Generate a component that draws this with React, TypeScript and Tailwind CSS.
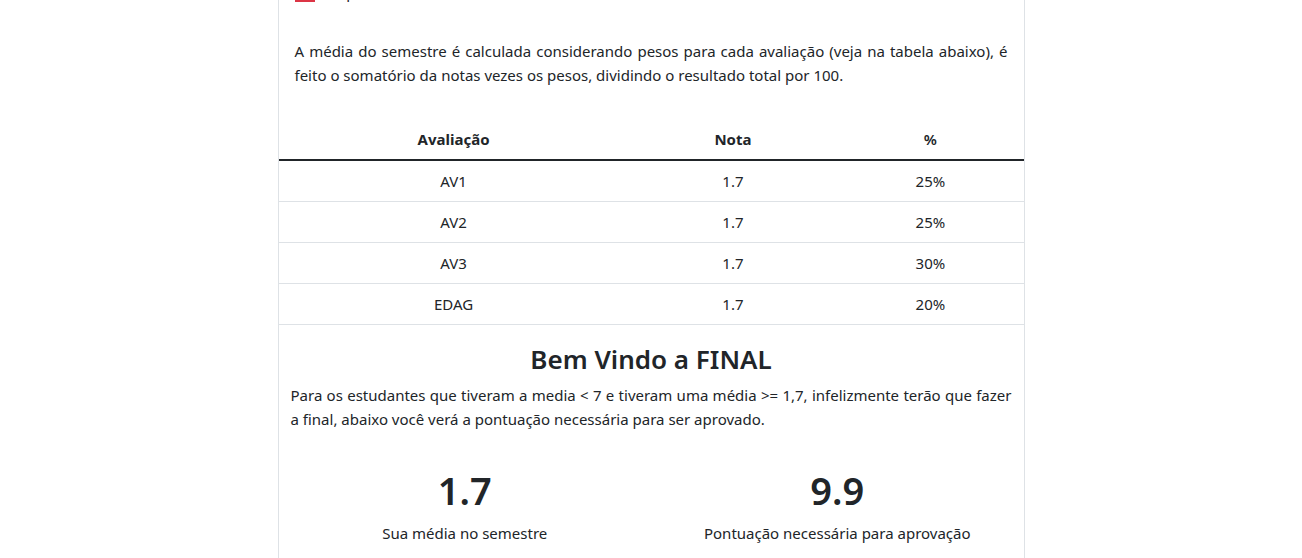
const rows = [
  { name: 'AV1', grade: '1.7', weight: '25%' },
  { name: 'AV2', grade: '1.7', weight: '25%' },
  { name: 'AV3', grade: '1.7', weight: '30%' },
  { name: 'EDAG', grade: '1.7', weight: '20%' },
];

function Result({ value, label }: { value: string; label: string }) {
  return (
    <div className="flex flex-1 flex-col items-center">
      <h2 className="mb-2 text-[38px] leading-[46px] font-semibold">{value}</h2>
      <p>{label}</p>
    </div>
  );
}

export default function App() {
  return (
    <div className="h-screen overflow-hidden bg-white font-['Noto_Sans','Open_Sans',sans-serif] text-[15px] leading-6 text-[#212529]">
      <main className="mx-auto min-h-screen max-w-[747px] border-x border-[#dee2e6]">
        <div className="flex h-[39px] items-start gap-3.5 px-4">
          <span className="h-[2px] w-5 bg-[#dc3545]" />
          <span className="-mt-5">Reprovado</span>
        </div>
        <p className="px-4 text-justify">
          A média do semestre é calculada considerando pesos para cada avaliação (veja na tabela abaixo), é
          feito o somatório da notas vezes os pesos, dividindo o resultado total por 100.
        </p>
        <table className="mt-8 w-full table-fixed border-collapse text-center">
          <thead>
            <tr className="border-b-2 border-[#212529]">
              <th scope="col" className="w-[47%] p-2 font-bold">Avaliação</th>
              <th scope="col" className="w-[28%] p-2 font-bold">Nota</th>
              <th scope="col" className="w-[25%] p-2 font-semibold">%</th>
            </tr>
          </thead>
          <tbody>
            {rows.map((row) => (
              <tr key={row.name} className="border-b border-[#dee2e6]">
                <td className="p-2">{row.name}</td>
                <td className="p-2">{row.grade}</td>
                <td className="p-2">{row.weight}</td>
              </tr>
            ))}
          </tbody>
        </table>
        <section className="px-3 pt-4">
          <h1 className="mb-1.5 text-center text-[26px] leading-9 font-semibold">Bem Vindo a FINAL</h1>
          <p className="text-justify">
            Para os estudantes que tiveram a media &lt; 7 e tiveram uma média &gt;= 1,7, infelizmente terão que fazer
            a final, abaixo você verá a pontuação necessária para ser aprovado.
          </p>
        </section>
        <div className="flex pt-9">
          <Result value="1.7" label="Sua média no semestre" />
          <Result value="9.9" label="Pontuação necessária para aprovação" />
        </div>
      </main>
    </div>
  );
}
